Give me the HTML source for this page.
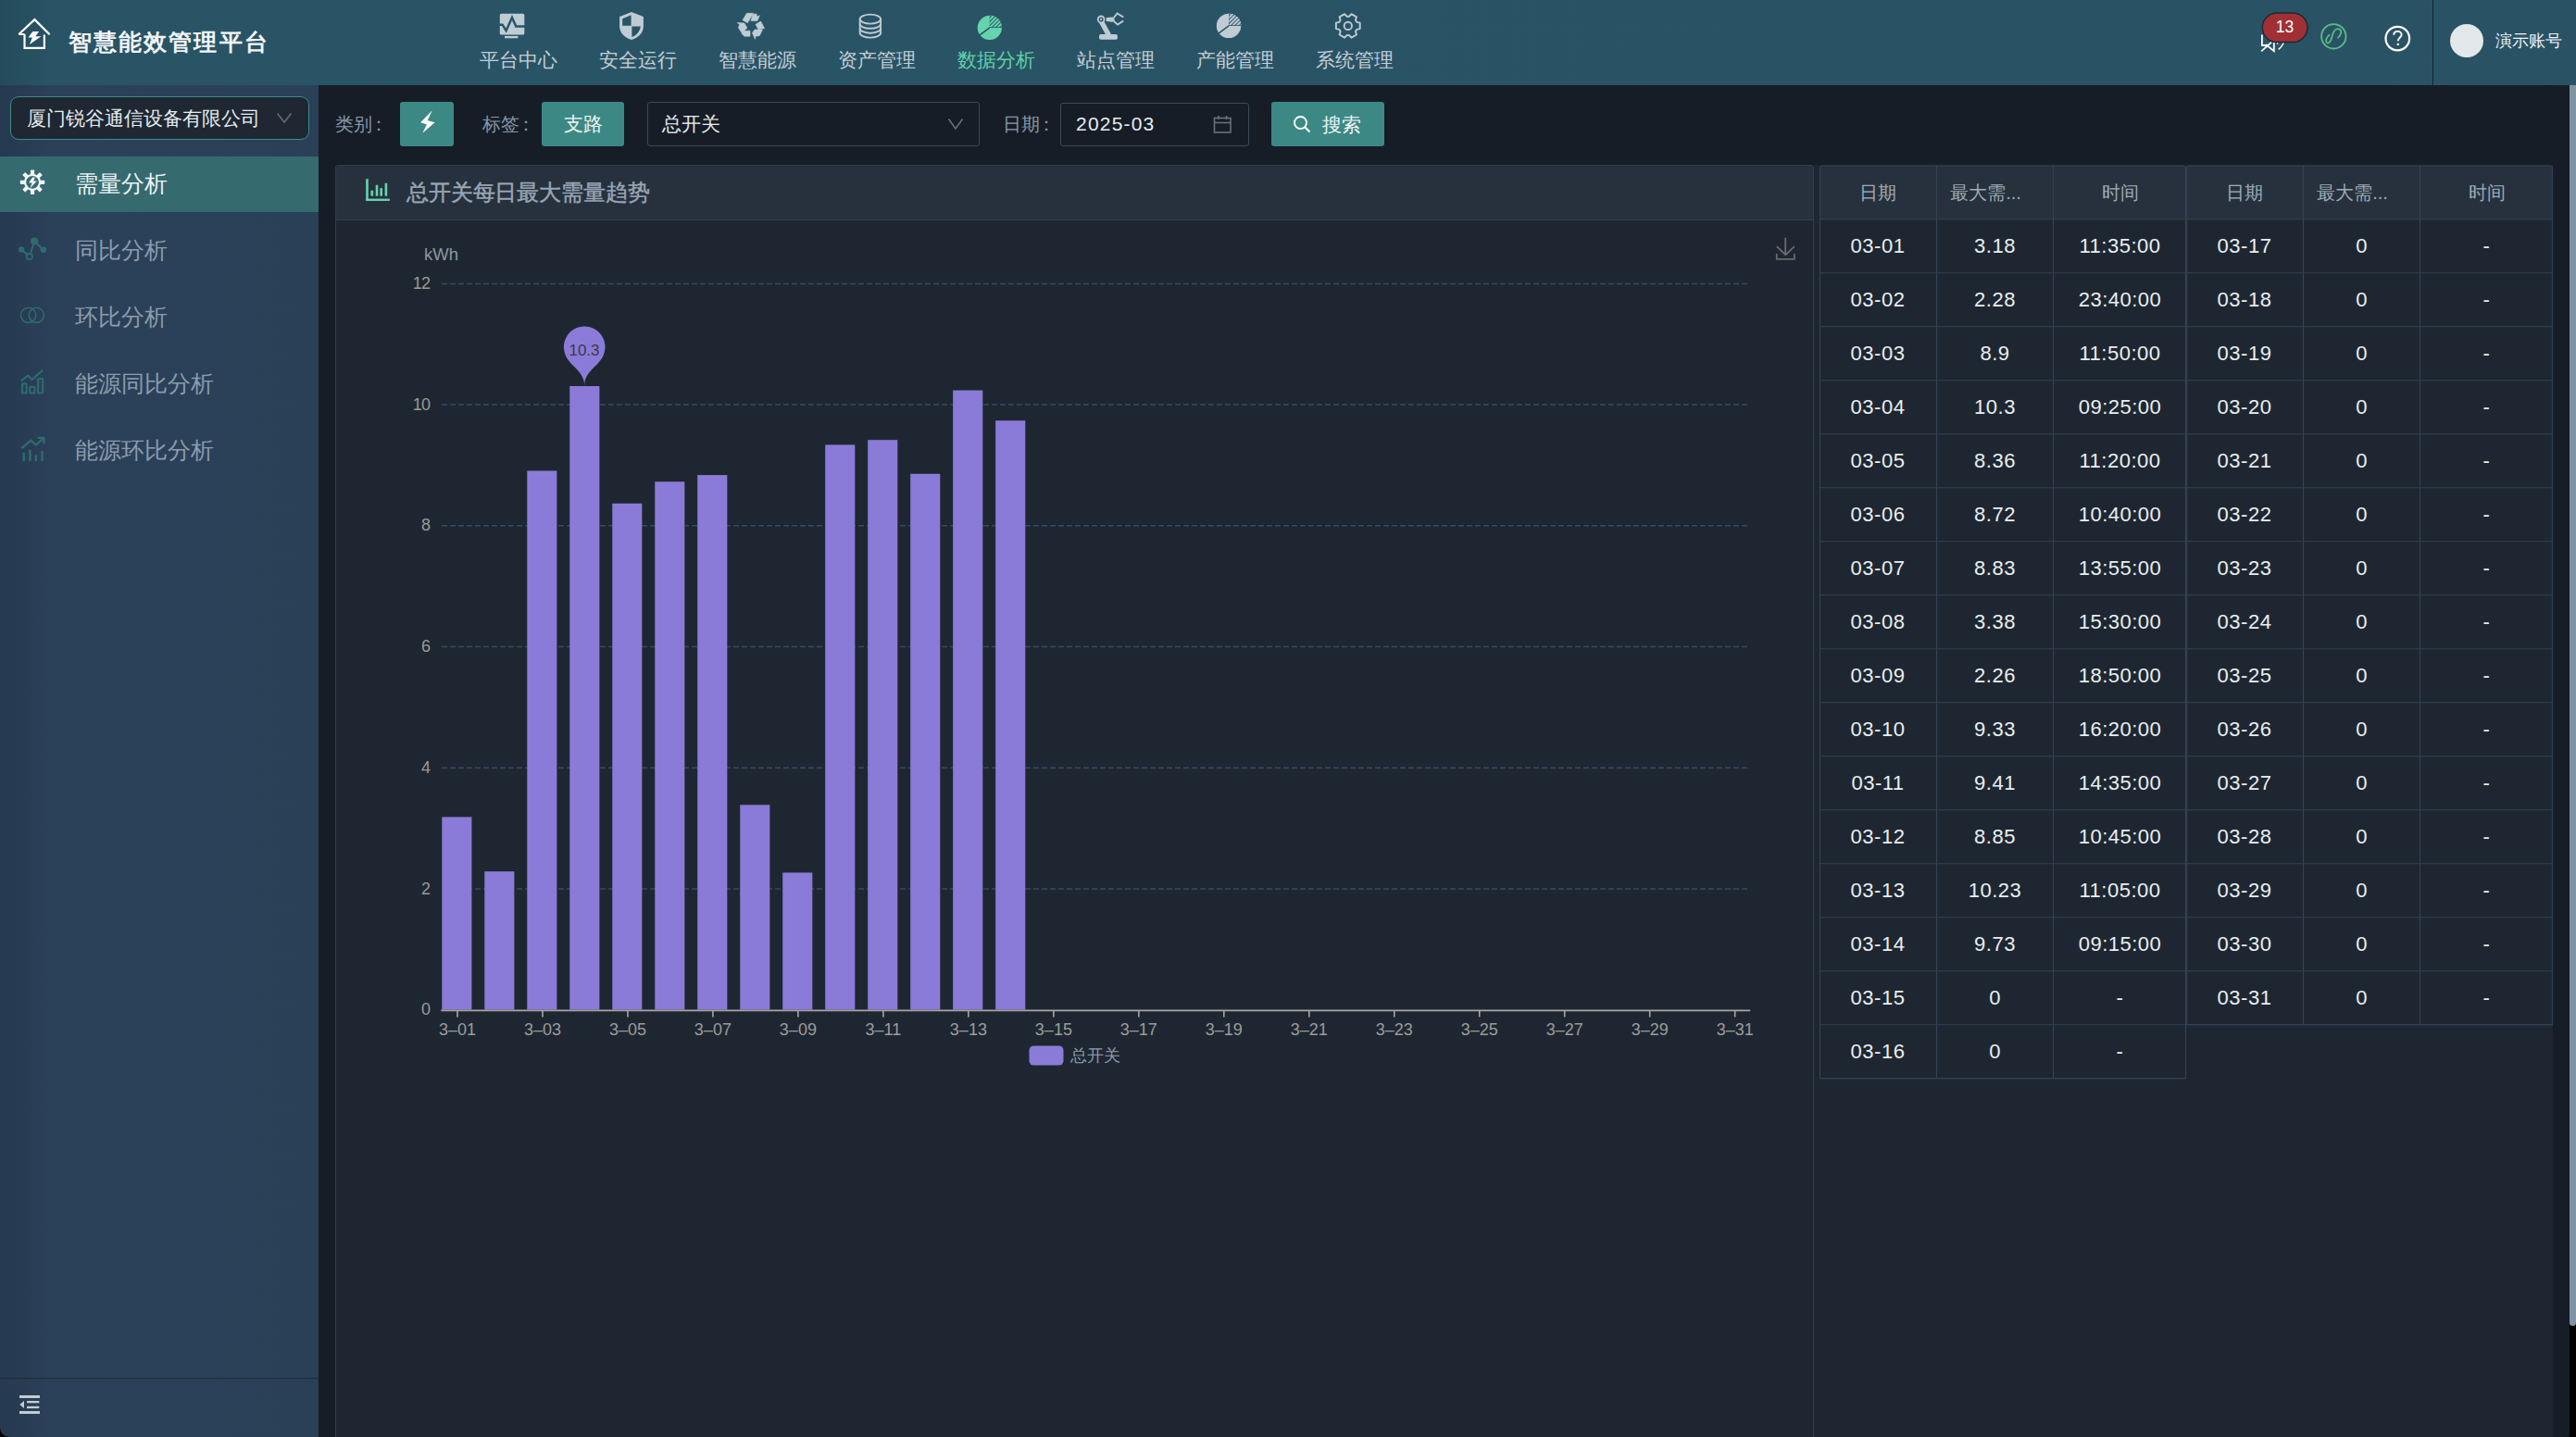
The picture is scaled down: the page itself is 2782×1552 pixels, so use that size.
<!DOCTYPE html><html><head><meta charset="utf-8"><style>
*{margin:0;padding:0;box-sizing:border-box}
html,body{width:2782px;height:1552px;overflow:hidden;background:#161d26;font-family:"Liberation Sans",sans-serif}
div,span,svg{position:absolute}
.t{white-space:nowrap}
.nav{top:53px;font-size:20.5px;color:#c3ced6;line-height:24px;width:120px;text-align:center}
.nav.on{color:#5fcfa8}
.mi{left:81px;font-size:24.5px;color:#8b9cad;line-height:28px;white-space:nowrap}
.lbl{top:122px;font-size:20px;color:#8796a6;line-height:24px;white-space:nowrap}
.cell{text-align:center;font-size:22px;color:#eaeef1;line-height:24px;letter-spacing:0.5px;white-space:nowrap}
.hcell{text-align:center;font-size:20px;color:#9eabb8;line-height:24px;white-space:nowrap}
.yl{width:60px;font-size:18px;color:#9a9a9a;line-height:20px;text-align:right;letter-spacing:-0.9px}
.xl{top:1102px;width:80px;font-size:18px;color:#9c9c9c;line-height:20px;text-align:center}
</style></head><body>
<div style="left:0;top:0;width:2782px;height:92px;background:linear-gradient(to right,#244b5c 0px,#295465 56px,#295364 2782px)"></div>
<svg style="left:0;top:0" width="80" height="80" viewBox="0 0 80 80">
<path d="M20.3 37 L37.4 21.1 L53.6 37.2 M26.5 37 V51.9 H47.9 V37.6 M20.3 37 H26.5" fill="none" stroke="#fff" stroke-width="2.2" stroke-linejoin="miter"/>
<path d="M42.1 34.1 H35.3 L30.5 40.6 H34.9 L32 47.9 L44.4 39.3 H38.3 Z" fill="#fff"/>
</svg>
<div class="t" style="left:74px;top:28.5px;font-size:25.3px;font-weight:bold;color:#f2f5f7;line-height:32px;letter-spacing:2.1px">智慧能效管理平台</div>
<div class="nav" style="left:500px">平台中心</div>
<div class="nav" style="left:629px">安全运行</div>
<div class="nav" style="left:758px">智慧能源</div>
<div class="nav" style="left:887px">资产管理</div>
<div class="nav on" style="left:1016px">数据分析</div>
<div class="nav" style="left:1145px">站点管理</div>
<div class="nav" style="left:1274px">产能管理</div>
<div class="nav" style="left:1403px">系统管理</div>
<svg style="left:0;top:0" width="1600" height="92" viewBox="0 0 1600 92"><rect x="539.8" y="14.8" width="26.5" height="22.7" rx="1.6" fill="#bfccd4"/><path d="M538 26.7 H542.6 L546.6 33.2 L553 19 L557.3 28.6 H568" fill="none" stroke="#295465" stroke-width="2.5" stroke-linejoin="miter"/><rect x="545" y="38.9" width="14.4" height="2.4" fill="#bfccd4"/><path d="M682 13 L694.9 17.9 V28.5 C694.9 35.5 689.5 40.5 682 43.1 C674.5 40.5 669.1 35.5 669.1 28.5 V17.9 Z" fill="#bfccd4"/><path d="M672.2 20.2 L681.6 16.3 V27.7 H672.2 Z M682.4 28.4 H691.8 C691.2 33.8 687.5 37.8 682.4 40.1 Z" fill="#295465"/><path d="M801.99 21.64 L806.48 14.31 L813.58 14.31 L807.43 24.72Z" fill="#bfccd4" stroke="#bfccd4" stroke-width="0.6" stroke-linejoin="round"/><path d="M810.98 22.59 L812.87 15.73 L816.42 14.78 L818.07 18.10 L820.44 16.68 L817.83 22.59Z" fill="#bfccd4" stroke="#bfccd4" stroke-width="0.6" stroke-linejoin="round"/><path d="M796.07 24.48 L803.88 24.95 L806.95 30.16 L801.04 35.60 L797.49 29.92 L798.68 26.37Z" fill="#bfccd4" stroke="#bfccd4" stroke-width="0.6" stroke-linejoin="round"/><path d="M802.93 33.23 L810.03 33.23 L810.03 39.15 L803.88 39.15 L800.81 36.07Z" fill="#bfccd4" stroke="#bfccd4" stroke-width="0.6" stroke-linejoin="round"/><path d="M812.39 35.60 L815.00 32.05 L823.51 32.05 L820.20 38.67 L816.18 38.91 L815.47 42.22Z" fill="#bfccd4" stroke="#bfccd4" stroke-width="0.6" stroke-linejoin="round"/><path d="M815.94 26.37 L821.62 23.06 L825.64 30.63 L819.02 31.81Z" fill="#bfccd4" stroke="#bfccd4" stroke-width="0.6" stroke-linejoin="round"/><g fill="none" stroke="#bfccd4" stroke-width="1.9"><ellipse cx="939.9" cy="20.6" rx="11.2" ry="5"/><path d="M928.6999999999999 20.6 V35.6 A11.2 5 0 0 0 951.1 35.6 V20.6"/><path d="M928.6999999999999 25.8 A11.2 5 0 0 0 951.1 25.8 M928.6999999999999 30.7 A11.2 5 0 0 0 951.1 30.7"/></g><path d="M1068.8 29.9 V16.799999999999997 A13.1 13.1 0 1 0 1081.8999999999999 29.9 Z" fill="#64d3ae"/><path d="M1068.8 29.9 L1057.54 38.39" stroke="#295465" stroke-width="1.5"/><clipPath id="pg"><path d="M1069.1 29.299999999999997 V16.499999999999996 A13.4 13.4 0 0 1 1082.1999999999998 29.299999999999997 Z"/></clipPath><g clip-path="url(#pg)"><path d="M1049.6 31.9 L1068.6999999999998 12.799999999999997 M1053.8999999999999 31.9 L1072.9999999999998 12.799999999999997 M1058.2 31.9 L1077.3 12.799999999999997 M1062.5 31.9 L1081.6 12.799999999999997 M1066.8 31.9 L1085.8999999999999 12.799999999999997 M1071.1 31.9 L1090.1999999999998 12.799999999999997 M1075.3999999999999 31.9 L1094.4999999999998 12.799999999999997 M1079.7 31.9 L1098.8 12.799999999999997 M1084.0 31.9 L1103.1 12.799999999999997 M1088.3 31.9 L1107.3999999999999 12.799999999999997 M1092.6 31.9 L1111.6999999999998 12.799999999999997 M1096.8999999999999 31.9 L1115.9999999999998 12.799999999999997 M1101.2 31.9 L1120.3 12.799999999999997" stroke="#64d3ae" stroke-width="2.1"/></g><path d="M1327.0 27.9 V14.7 A13.2 13.2 0 1 0 1340.2 27.9 Z" fill="#bfccd4"/><path d="M1327.0 27.9 L1315.66 36.45" stroke="#295465" stroke-width="1.5"/><clipPath id="pi"><path d="M1327.3 27.299999999999997 V14.399999999999999 A13.5 13.5 0 0 1 1340.5 27.299999999999997 Z"/></clipPath><g clip-path="url(#pi)"><path d="M1307.8 29.9 L1327.0 10.7 M1312.1 29.9 L1331.3 10.7 M1316.4 29.9 L1335.6000000000001 10.7 M1320.7 29.9 L1339.9 10.7 M1325.0 29.9 L1344.2 10.7 M1329.3 29.9 L1348.5 10.7 M1333.6 29.9 L1352.8 10.7 M1337.9 29.9 L1357.1000000000001 10.7 M1342.2 29.9 L1361.4 10.7 M1346.5 29.9 L1365.7 10.7 M1350.8 29.9 L1370.0 10.7 M1355.1 29.9 L1374.3 10.7 M1359.4 29.9 L1378.6000000000001 10.7" stroke="#bfccd4" stroke-width="2.1"/></g><rect x="1187" y="37.1" width="19.9" height="5.6" rx="1.8" fill="#bfccd4"/><path d="M1197.5 38 L1189.5 23.5" stroke="#bfccd4" stroke-width="5.4"/><circle cx="1189.1" cy="20.9" r="4.3" fill="#bfccd4"/><circle cx="1189.1" cy="20.9" r="2.5" fill="#295465"/><circle cx="1189.1" cy="20.9" r="1.1" fill="#bfccd4"/><path d="M1194.6 19.1 L1201.5 18.4 L1204 21 L1201.5 23.8 L1194.6 23.1 Z" fill="#bfccd4"/><path d="M1202.5 19.5 L1206.6 14.4 L1213.2 18.5 M1202.5 22.5 L1207 26.6 L1213.2 22.5" fill="none" stroke="#bfccd4" stroke-width="1.9"/><path d="M1465.19 23.91 L1468.70 24.68 L1468.70 31.12 L1465.19 31.89 A10.2 10.2 0 0 1 1463.95 34.04 L1465.04 37.47 L1459.47 40.68 L1457.04 38.02 A10.2 10.2 0 0 1 1454.56 38.02 L1452.13 40.68 L1446.56 37.47 L1447.65 34.04 A10.2 10.2 0 0 1 1446.41 31.89 L1442.90 31.12 L1442.90 24.68 L1446.41 23.91 A10.2 10.2 0 0 1 1447.65 21.76 L1446.56 18.33 L1452.13 15.12 L1454.56 17.78 A10.2 10.2 0 0 1 1457.04 17.78 L1459.47 15.12 L1465.04 18.33 L1463.95 21.76 A10.2 10.2 0 0 1 1465.19 23.91Z" fill="none" stroke="#bfccd4" stroke-width="1.9" stroke-linejoin="round"/><circle cx="1455.8" cy="27.9" r="4.2" fill="none" stroke="#bfccd4" stroke-width="1.9"/></svg>
<div style="left:2626.6px;top:0;width:1.4px;height:92px;background:#15212c"></div>
<svg style="left:2430px;top:0" width="200" height="92" viewBox="2430 0 200 92">
<g fill="none" stroke="#fff" stroke-width="1.8">
<path d="M2442.9 37.6 V49 H2449.1"/><path d="M2442.2 55.4 L2453.1 45.6"/><path d="M2447 48 L2455.8 55.2 V46"/>
<path d="M2460.7 53.4 C2463 51.5 2465 49 2466.3 46.5" stroke-width="1.5"/></g>
<circle cx="2459.6" cy="46.9" r="0.9" fill="#fff"/>
<rect x="2443.3" y="13.9" width="48.7" height="31.7" rx="15.85" fill="#a13034" stroke="#1c2a34" stroke-width="1.5"/>
<circle cx="2520.3" cy="39.3" r="13.2" fill="none" stroke="#5cbd87" stroke-width="1.8"/>
<path d="M2525.1 40.6 C2528.5 37.5 2529.5 33.5 2526.8 31.8 C2524.2 30.2 2520.8 32.2 2519.6 36 L2517.6 42.6 C2516.6 46 2513.8 47.6 2512.6 45.6 C2511.5 43.5 2513 40 2515.6 37.6" fill="none" stroke="#5cbd87" stroke-width="1.7" stroke-linecap="round"/>
<circle cx="2589.3" cy="41.6" r="12.8" fill="none" stroke="#fff" stroke-width="2.2"/>
<path d="M2585.2 37.8 C2585.2 35.4 2587 33.9 2589.4 33.9 C2591.8 33.9 2593.6 35.5 2593.6 37.6 C2593.6 40.3 2589.8 40.8 2589.8 44.3" fill="none" stroke="#fff" stroke-width="1.9"/>
<circle cx="2589.8" cy="47.9" r="1.2" fill="#fff"/>
</svg>
<div class="t" style="left:2443px;top:16px;width:49px;text-align:center;font-size:17.5px;color:#fff;line-height:26px">13</div>
<div style="left:2645.8px;top:25.7px;width:36.3px;height:36.3px;border-radius:50%;background:#e3e8ea"></div>
<div class="t" style="left:2694.5px;top:32px;font-size:18px;color:#eef2f4;line-height:24px">演示账号</div>
<div style="left:0;top:92px;width:344px;height:1460px;background:linear-gradient(to right,#25394f 0px,#2b4159 56px,#2a4057 344px)"></div>
<div style="left:11px;top:104px;width:323px;height:46.5px;border-radius:9px;border:1.5px solid #3c8c86;background:#1e2732"></div>
<div class="t" style="left:28.5px;top:115px;font-size:20.8px;color:#e6ebee;line-height:26px">厦门锐谷通信设备有限公司</div>
<svg style="left:296px;top:119px" width="22" height="18" viewBox="0 0 22 18"><path d="M3.5 3.5 L11 13 L18.5 3.5" fill="none" stroke="#646c76" stroke-width="1.6"/></svg>
<div style="left:0;top:169px;width:344px;height:60px;background:#356a6f"></div>
<svg style="left:0;top:0" width="344" height="1552" viewBox="0 0 344 1552"><circle cx="35.04" cy="196.8" r="8.0" fill="none" stroke="#f1f3f4" stroke-width="2.2"/><rect x="32.94" y="183.6" width="4.2" height="5.6" rx="0.6" fill="#f1f3f4" transform="rotate(0 35.04 196.8)"/><rect x="32.94" y="183.6" width="4.2" height="5.6" rx="0.6" fill="#f1f3f4" transform="rotate(45 35.04 196.8)"/><rect x="32.94" y="183.6" width="4.2" height="5.6" rx="0.6" fill="#f1f3f4" transform="rotate(90 35.04 196.8)"/><rect x="32.94" y="183.6" width="4.2" height="5.6" rx="0.6" fill="#f1f3f4" transform="rotate(135 35.04 196.8)"/><rect x="32.94" y="183.6" width="4.2" height="5.6" rx="0.6" fill="#f1f3f4" transform="rotate(180 35.04 196.8)"/><rect x="32.94" y="183.6" width="4.2" height="5.6" rx="0.6" fill="#f1f3f4" transform="rotate(225 35.04 196.8)"/><rect x="32.94" y="183.6" width="4.2" height="5.6" rx="0.6" fill="#f1f3f4" transform="rotate(270 35.04 196.8)"/><rect x="32.94" y="183.6" width="4.2" height="5.6" rx="0.6" fill="#f1f3f4" transform="rotate(315 35.04 196.8)"/><path d="M35.04 191.47 L37.93 191.47 L36.15 195.48 L39.94 195.48 L32.36 203.5 L34.59 197.48 L31.03 197.48 Z" fill="#f1f3f4"/><g stroke="#2e6c6d" stroke-width="2" fill="none"><path d="M23.2 269.4 L31.8 277 L37.2 260.6 L46.8 269.8"/></g><g fill="#2e6c6d"><circle cx="37.2" cy="260.6" r="4"/><circle cx="23.2" cy="269.4" r="3.2"/><circle cx="46.8" cy="269.8" r="3.2"/></g><circle cx="31.8" cy="277" r="3.2" fill="#2b4159" stroke="#2e6c6d" stroke-width="1.7"/><g fill="none" stroke="#2e6c6d" stroke-width="1.5"><circle cx="30.6" cy="340.4" r="8.1"/><circle cx="39.4" cy="340.4" r="8.1"/></g><g fill="none" stroke="#2e6c6d" stroke-width="2.1" stroke-linecap="round" stroke-linejoin="round"><path d="M23.4 410.9 L30.1 405.5 L34.6 410 L45.5 400.4"/><rect x="24" y="414.4" width="4.6" height="10.1" rx="0.8"/><rect x="32.3" y="417.7" width="5.1" height="6.8" rx="0.8"/><rect x="41.1" y="409" width="5.1" height="15.5" rx="0.8"/></g><g fill="none" stroke="#2e6c6d" stroke-width="2.3" stroke-linecap="round" stroke-linejoin="round"><path d="M23.8 483.6 L33.4 475.6 L38.8 480.6 L46.8 473.5"/><path d="M41.5 472.8 H47.4 V478.5"/><path d="M25.7 490 V497 M32.4 486.8 V497 M38.8 492.5 V497 M45.5 488 V497" stroke-width="2.5"/></g><rect x="0" y="1488" width="344" height="1.2" fill="#1d2d3c"/><g fill="#c4ccd4"><rect x="21" y="1507" width="22" height="3"/><rect x="21" y="1524" width="22" height="3"/><rect x="29" y="1513" width="13.3" height="2.3"/><rect x="29" y="1518.8" width="13.3" height="2.3"/><path d="M21.3 1517 L26 1513 V1521 Z"/></g><path d="M0 1542 A10 10 0 0 0 10 1552 H0 Z" fill="#000"/></svg>
<div class="mi" style="top:185px;color:#eef3f5">需量分析</div>
<div class="mi" style="top:257px">同比分析</div>
<div class="mi" style="top:329px">环比分析</div>
<div class="mi" style="top:401px">能源同比分析</div>
<div class="mi" style="top:473px">能源环比分析</div>
<div class="lbl" style="left:362px">类别<span style="position:relative;left:-3px">：</span></div>
<div style="left:432px;top:110px;width:58px;height:47.5px;background:#3c8884;border-radius:3px"></div>
<svg style="left:448px;top:115px" width="28" height="34" viewBox="0 0 28 34"><path d="M18.75 4.2 L6.2 17.35 L12.9 19.4 L8.3 28.8 L21.7 17.35 L13.7 15.05 Z" fill="#fff"/></svg>
<div class="lbl" style="left:521px">标签<span style="position:relative;left:-3px">：</span></div>
<div style="left:585px;top:110px;width:89px;height:47.5px;background:#3c8884;border-radius:3px"></div>
<div class="t" style="left:585px;top:121px;width:89px;text-align:center;font-size:21px;color:#f1f5f5;line-height:26px">支路</div>
<div style="left:698.5px;top:110px;width:359px;height:47.5px;border:1.3px solid #3b4857;border-radius:3px"></div>
<div class="t" style="left:715px;top:121px;font-size:20.5px;color:#e9edf0;line-height:26px">总开关</div>
<svg style="left:1021px;top:124px" width="22" height="20" viewBox="0 0 22 20"><path d="M3.5 4.5 L11 15 L18.5 4.5" fill="none" stroke="#6f767e" stroke-width="1.4"/></svg>
<div class="lbl" style="left:1083px">日期<span style="position:relative;left:-3px">：</span></div>
<div style="left:1145px;top:111px;width:203.5px;height:46.5px;border:1.3px solid #3b4857;border-radius:3px"></div>
<div class="t" style="left:1162px;top:121px;font-size:21px;color:#e9edf0;line-height:26px;letter-spacing:1.2px">2025-03</div>
<svg style="left:1308px;top:123px" width="26" height="24" viewBox="0 0 26 24">
<g fill="none" stroke="#6a717b" stroke-width="1.6"><rect x="3.5" y="4.5" width="17.5" height="15.5"/><path d="M3.5 9.5 H21 M8 2 V6 M16.5 2 V6"/></g></svg>
<div style="left:1373px;top:110px;width:122px;height:47.5px;background:#3c8884;border-radius:3px"></div>
<svg style="left:1393px;top:122px" width="26" height="24" viewBox="0 0 26 24">
<circle cx="11.5" cy="10.5" r="6.5" fill="none" stroke="#fff" stroke-width="1.9"/><path d="M16.2 15.2 L21.5 20.5" stroke="#fff" stroke-width="2"/></svg>
<div class="t" style="left:1428px;top:122px;font-size:21px;color:#f1f5f5;line-height:26px">搜索</div>
<div style="left:362px;top:178px;width:1597px;height:1380px;background:#1e2731;border:1.3px solid #2f3d4b;border-radius:3px"></div>
<div style="left:363px;top:179px;width:1595px;height:59.3px;background:#27313d;border-bottom:1.3px solid #2f3f4e;border-radius:3px 3px 0 0"></div>
<svg style="left:392px;top:191px" width="32" height="28" viewBox="0 0 32 28">
<g fill="#64d4ae"><rect x="3.2" y="2.2" width="2.6" height="23.8"/><rect x="3.2" y="23.6" width="25.7" height="2.4"/>
<rect x="8.5" y="14.7" width="2.6" height="6"/><rect x="13.7" y="8.8" width="2.6" height="11.9"/><rect x="18.4" y="12.1" width="2.6" height="8.6"/><rect x="23.6" y="6.8" width="2.6" height="13.9"/></g></svg>
<div class="t" style="left:439px;top:192.5px;font-size:23.6px;color:#97a5b4;line-height:30px;letter-spacing:-0.15px;-webkit-text-stroke:0.45px #97a5b4">总开关每日最大需量趋势</div>
<svg style="left:1912px;top:252px" width="32" height="34" viewBox="0 0 32 34">
<g fill="none" stroke="#686a6d" stroke-width="1.8"><path d="M16.2 4.8 V22.5 M6.8 14.2 L16.4 23.2 L25.9 14.2 M6.8 21.9 V27.8 H25.9 V21.9"/></g></svg>
<div class="t" style="left:458px;top:264px;font-size:18.5px;color:#8d97a1;line-height:22px">kWh</div>
<svg style="left:0;top:0" width="2782" height="1552" viewBox="0 0 2782 1552"><line x1="477" y1="959.98" x2="1890" y2="959.98" stroke="#34495f" stroke-width="1.5" stroke-dasharray="6 3"/><line x1="477" y1="829.26" x2="1890" y2="829.26" stroke="#34495f" stroke-width="1.5" stroke-dasharray="6 3"/><line x1="477" y1="698.54" x2="1890" y2="698.54" stroke="#34495f" stroke-width="1.5" stroke-dasharray="6 3"/><line x1="477" y1="567.82" x2="1890" y2="567.82" stroke="#34495f" stroke-width="1.5" stroke-dasharray="6 3"/><line x1="477" y1="437.10" x2="1890" y2="437.10" stroke="#34495f" stroke-width="1.5" stroke-dasharray="6 3"/><line x1="477" y1="306.38" x2="1890" y2="306.38" stroke="#34495f" stroke-width="1.5" stroke-dasharray="6 3"/><rect x="477.30" y="882.36" width="32.1" height="208.04" fill="#8b7bd8"/><rect x="523.29" y="941.18" width="32.1" height="149.22" fill="#8b7bd8"/><rect x="569.28" y="508.50" width="32.1" height="581.90" fill="#8b7bd8"/><rect x="615.27" y="416.99" width="32.1" height="673.41" fill="#8b7bd8"/><rect x="661.26" y="543.79" width="32.1" height="546.61" fill="#8b7bd8"/><rect x="707.25" y="520.26" width="32.1" height="570.14" fill="#8b7bd8"/><rect x="753.24" y="513.07" width="32.1" height="577.33" fill="#8b7bd8"/><rect x="799.23" y="869.28" width="32.1" height="221.12" fill="#8b7bd8"/><rect x="845.22" y="942.49" width="32.1" height="147.91" fill="#8b7bd8"/><rect x="891.21" y="480.39" width="32.1" height="610.01" fill="#8b7bd8"/><rect x="937.20" y="475.16" width="32.1" height="615.24" fill="#8b7bd8"/><rect x="983.19" y="511.76" width="32.1" height="578.64" fill="#8b7bd8"/><rect x="1029.18" y="421.57" width="32.1" height="668.83" fill="#8b7bd8"/><rect x="1075.17" y="454.25" width="32.1" height="636.15" fill="#8b7bd8"/><line x1="476.3" y1="1091.40" x2="1890.2" y2="1091.40" stroke="#a6a6a6" stroke-width="1.6"/><line x1="494.00" y1="1091.40" x2="494.00" y2="1098.40" stroke="#a6a6a6" stroke-width="1.6"/><line x1="585.98" y1="1091.40" x2="585.98" y2="1098.40" stroke="#a6a6a6" stroke-width="1.6"/><line x1="677.96" y1="1091.40" x2="677.96" y2="1098.40" stroke="#a6a6a6" stroke-width="1.6"/><line x1="769.94" y1="1091.40" x2="769.94" y2="1098.40" stroke="#a6a6a6" stroke-width="1.6"/><line x1="861.92" y1="1091.40" x2="861.92" y2="1098.40" stroke="#a6a6a6" stroke-width="1.6"/><line x1="953.90" y1="1091.40" x2="953.90" y2="1098.40" stroke="#a6a6a6" stroke-width="1.6"/><line x1="1045.88" y1="1091.40" x2="1045.88" y2="1098.40" stroke="#a6a6a6" stroke-width="1.6"/><line x1="1137.86" y1="1091.40" x2="1137.86" y2="1098.40" stroke="#a6a6a6" stroke-width="1.6"/><line x1="1229.84" y1="1091.40" x2="1229.84" y2="1098.40" stroke="#a6a6a6" stroke-width="1.6"/><line x1="1321.82" y1="1091.40" x2="1321.82" y2="1098.40" stroke="#a6a6a6" stroke-width="1.6"/><line x1="1413.80" y1="1091.40" x2="1413.80" y2="1098.40" stroke="#a6a6a6" stroke-width="1.6"/><line x1="1505.78" y1="1091.40" x2="1505.78" y2="1098.40" stroke="#a6a6a6" stroke-width="1.6"/><line x1="1597.76" y1="1091.40" x2="1597.76" y2="1098.40" stroke="#a6a6a6" stroke-width="1.6"/><line x1="1689.74" y1="1091.40" x2="1689.74" y2="1098.40" stroke="#a6a6a6" stroke-width="1.6"/><line x1="1781.72" y1="1091.40" x2="1781.72" y2="1098.40" stroke="#a6a6a6" stroke-width="1.6"/><line x1="1873.70" y1="1091.40" x2="1873.70" y2="1098.40" stroke="#a6a6a6" stroke-width="1.6"/><rect x="1111.5" y="1129.4" width="37" height="21.2" rx="5" fill="#8b7bd8"/><path d="M611.10 384.41 A22.3 22.3 0 1 1 651.30 384.41 C645.51 396.47 631.20 400.99 631.20 416.60 C631.20 400.99 616.89 396.47 611.10 384.41Z" fill="#8b7bd8"/></svg>
<div class="t" style="left:591px;top:368px;width:80px;text-align:center;font-size:17px;color:#3b3946;line-height:22px">10.3</div>
<div class="yl" style="left:404.1px;top:1080.2px">0</div>
<div class="yl" style="left:404.1px;top:949.5px">2</div>
<div class="yl" style="left:404.1px;top:818.8px">4</div>
<div class="yl" style="left:404.1px;top:688.0px">6</div>
<div class="yl" style="left:404.1px;top:557.3px">8</div>
<div class="yl" style="left:404.1px;top:426.6px">10</div>
<div class="yl" style="left:404.1px;top:295.9px">12</div>
<div class="xl" style="left:454.0px">3–01</div>
<div class="xl" style="left:546.0px">3–03</div>
<div class="xl" style="left:638.0px">3–05</div>
<div class="xl" style="left:729.9px">3–07</div>
<div class="xl" style="left:821.9px">3–09</div>
<div class="xl" style="left:913.9px">3–11</div>
<div class="xl" style="left:1005.9px">3–13</div>
<div class="xl" style="left:1097.9px">3–15</div>
<div class="xl" style="left:1189.8px">3–17</div>
<div class="xl" style="left:1281.8px">3–19</div>
<div class="xl" style="left:1373.8px">3–21</div>
<div class="xl" style="left:1465.8px">3–23</div>
<div class="xl" style="left:1557.8px">3–25</div>
<div class="xl" style="left:1649.7px">3–27</div>
<div class="xl" style="left:1741.7px">3–29</div>
<div class="xl" style="left:1833.7px">3–31</div>
<div class="t" style="left:1156px;top:1128px;font-size:18px;color:#8e9ca8;line-height:24px">总开关</div>
<div style="left:1959px;top:178px;width:798px;height:1380px;background:#1e2731"></div>
<div style="left:1965px;top:178.5px;width:396px;height:58.2px;background:#27313d;border-radius:4px 4px 0 0"></div>
<svg style="left:0;top:0" width="2782" height="1552" viewBox="0 0 2782 1552"><g stroke="#334252" stroke-width="1.15" fill="none"><path d="M1965.5 1164.7 V182.5 Q1965.5 179.0 1969 179.0 H2357 Q2360.5 179.0 2360.5 182.5 V1164.7 H1965.5"/><line x1="2091.5" y1="178.5" x2="2091.5" y2="1164.7"/><line x1="2217.5" y1="178.5" x2="2217.5" y2="1164.7"/><line x1="1965" y1="236.7" x2="2361" y2="236.7"/><line x1="1965" y1="294.7" x2="2361" y2="294.7"/><line x1="1965" y1="352.7" x2="2361" y2="352.7"/><line x1="1965" y1="410.7" x2="2361" y2="410.7"/><line x1="1965" y1="468.7" x2="2361" y2="468.7"/><line x1="1965" y1="526.7" x2="2361" y2="526.7"/><line x1="1965" y1="584.7" x2="2361" y2="584.7"/><line x1="1965" y1="642.7" x2="2361" y2="642.7"/><line x1="1965" y1="700.7" x2="2361" y2="700.7"/><line x1="1965" y1="758.7" x2="2361" y2="758.7"/><line x1="1965" y1="816.7" x2="2361" y2="816.7"/><line x1="1965" y1="874.7" x2="2361" y2="874.7"/><line x1="1965" y1="932.7" x2="2361" y2="932.7"/><line x1="1965" y1="990.7" x2="2361" y2="990.7"/><line x1="1965" y1="1048.7" x2="2361" y2="1048.7"/><line x1="1965" y1="1106.7" x2="2361" y2="1106.7"/><line x1="1965" y1="1164.7" x2="2361" y2="1164.7"/></g></svg>
<div class="hcell" style="left:1965px;top:195.5px;width:126px">日期</div>
<div class="hcell" style="left:2081.5px;top:195.5px;width:126px">最大需...</div>
<div class="hcell" style="left:2217.5px;top:195.5px;width:144px">时间</div>
<div class="cell" style="left:1965px;top:253.7px;width:126px">03-01</div>
<div class="cell" style="left:2091.5px;top:253.7px;width:126px">3.18</div>
<div class="cell" style="left:2217.5px;top:253.7px;width:144px">11:35:00</div>
<div class="cell" style="left:1965px;top:311.7px;width:126px">03-02</div>
<div class="cell" style="left:2091.5px;top:311.7px;width:126px">2.28</div>
<div class="cell" style="left:2217.5px;top:311.7px;width:144px">23:40:00</div>
<div class="cell" style="left:1965px;top:369.7px;width:126px">03-03</div>
<div class="cell" style="left:2091.5px;top:369.7px;width:126px">8.9</div>
<div class="cell" style="left:2217.5px;top:369.7px;width:144px">11:50:00</div>
<div class="cell" style="left:1965px;top:427.7px;width:126px">03-04</div>
<div class="cell" style="left:2091.5px;top:427.7px;width:126px">10.3</div>
<div class="cell" style="left:2217.5px;top:427.7px;width:144px">09:25:00</div>
<div class="cell" style="left:1965px;top:485.7px;width:126px">03-05</div>
<div class="cell" style="left:2091.5px;top:485.7px;width:126px">8.36</div>
<div class="cell" style="left:2217.5px;top:485.7px;width:144px">11:20:00</div>
<div class="cell" style="left:1965px;top:543.7px;width:126px">03-06</div>
<div class="cell" style="left:2091.5px;top:543.7px;width:126px">8.72</div>
<div class="cell" style="left:2217.5px;top:543.7px;width:144px">10:40:00</div>
<div class="cell" style="left:1965px;top:601.7px;width:126px">03-07</div>
<div class="cell" style="left:2091.5px;top:601.7px;width:126px">8.83</div>
<div class="cell" style="left:2217.5px;top:601.7px;width:144px">13:55:00</div>
<div class="cell" style="left:1965px;top:659.7px;width:126px">03-08</div>
<div class="cell" style="left:2091.5px;top:659.7px;width:126px">3.38</div>
<div class="cell" style="left:2217.5px;top:659.7px;width:144px">15:30:00</div>
<div class="cell" style="left:1965px;top:717.7px;width:126px">03-09</div>
<div class="cell" style="left:2091.5px;top:717.7px;width:126px">2.26</div>
<div class="cell" style="left:2217.5px;top:717.7px;width:144px">18:50:00</div>
<div class="cell" style="left:1965px;top:775.7px;width:126px">03-10</div>
<div class="cell" style="left:2091.5px;top:775.7px;width:126px">9.33</div>
<div class="cell" style="left:2217.5px;top:775.7px;width:144px">16:20:00</div>
<div class="cell" style="left:1965px;top:833.7px;width:126px">03-11</div>
<div class="cell" style="left:2091.5px;top:833.7px;width:126px">9.41</div>
<div class="cell" style="left:2217.5px;top:833.7px;width:144px">14:35:00</div>
<div class="cell" style="left:1965px;top:891.7px;width:126px">03-12</div>
<div class="cell" style="left:2091.5px;top:891.7px;width:126px">8.85</div>
<div class="cell" style="left:2217.5px;top:891.7px;width:144px">10:45:00</div>
<div class="cell" style="left:1965px;top:949.7px;width:126px">03-13</div>
<div class="cell" style="left:2091.5px;top:949.7px;width:126px">10.23</div>
<div class="cell" style="left:2217.5px;top:949.7px;width:144px">11:05:00</div>
<div class="cell" style="left:1965px;top:1007.7px;width:126px">03-14</div>
<div class="cell" style="left:2091.5px;top:1007.7px;width:126px">9.73</div>
<div class="cell" style="left:2217.5px;top:1007.7px;width:144px">09:15:00</div>
<div class="cell" style="left:1965px;top:1065.7px;width:126px">03-15</div>
<div class="cell" style="left:2091.5px;top:1065.7px;width:126px">0</div>
<div class="cell" style="left:2217.5px;top:1065.7px;width:144px">-</div>
<div class="cell" style="left:1965px;top:1123.7px;width:126px">03-16</div>
<div class="cell" style="left:2091.5px;top:1123.7px;width:126px">0</div>
<div class="cell" style="left:2217.5px;top:1123.7px;width:144px">-</div>
<div style="left:2361px;top:178.5px;width:396px;height:58.2px;background:#27313d;border-radius:4px 4px 0 0"></div>
<svg style="left:0;top:0" width="2782" height="1552" viewBox="0 0 2782 1552"><g stroke="#334252" stroke-width="1.15" fill="none"><path d="M2361.5 1106.7 V182.5 Q2361.5 179.0 2365 179.0 H2753 Q2756.5 179.0 2756.5 182.5 V1106.7 H2361.5"/><line x1="2487.5" y1="178.5" x2="2487.5" y2="1106.7"/><line x1="2613.5" y1="178.5" x2="2613.5" y2="1106.7"/><line x1="2361" y1="236.7" x2="2757" y2="236.7"/><line x1="2361" y1="294.7" x2="2757" y2="294.7"/><line x1="2361" y1="352.7" x2="2757" y2="352.7"/><line x1="2361" y1="410.7" x2="2757" y2="410.7"/><line x1="2361" y1="468.7" x2="2757" y2="468.7"/><line x1="2361" y1="526.7" x2="2757" y2="526.7"/><line x1="2361" y1="584.7" x2="2757" y2="584.7"/><line x1="2361" y1="642.7" x2="2757" y2="642.7"/><line x1="2361" y1="700.7" x2="2757" y2="700.7"/><line x1="2361" y1="758.7" x2="2757" y2="758.7"/><line x1="2361" y1="816.7" x2="2757" y2="816.7"/><line x1="2361" y1="874.7" x2="2757" y2="874.7"/><line x1="2361" y1="932.7" x2="2757" y2="932.7"/><line x1="2361" y1="990.7" x2="2757" y2="990.7"/><line x1="2361" y1="1048.7" x2="2757" y2="1048.7"/><line x1="2361" y1="1106.7" x2="2757" y2="1106.7"/></g></svg>
<div class="hcell" style="left:2361px;top:195.5px;width:126px">日期</div>
<div class="hcell" style="left:2477.5px;top:195.5px;width:126px">最大需...</div>
<div class="hcell" style="left:2613.5px;top:195.5px;width:144px">时间</div>
<div class="cell" style="left:2361px;top:253.7px;width:126px">03-17</div>
<div class="cell" style="left:2487.5px;top:253.7px;width:126px">0</div>
<div class="cell" style="left:2613.5px;top:253.7px;width:144px">-</div>
<div class="cell" style="left:2361px;top:311.7px;width:126px">03-18</div>
<div class="cell" style="left:2487.5px;top:311.7px;width:126px">0</div>
<div class="cell" style="left:2613.5px;top:311.7px;width:144px">-</div>
<div class="cell" style="left:2361px;top:369.7px;width:126px">03-19</div>
<div class="cell" style="left:2487.5px;top:369.7px;width:126px">0</div>
<div class="cell" style="left:2613.5px;top:369.7px;width:144px">-</div>
<div class="cell" style="left:2361px;top:427.7px;width:126px">03-20</div>
<div class="cell" style="left:2487.5px;top:427.7px;width:126px">0</div>
<div class="cell" style="left:2613.5px;top:427.7px;width:144px">-</div>
<div class="cell" style="left:2361px;top:485.7px;width:126px">03-21</div>
<div class="cell" style="left:2487.5px;top:485.7px;width:126px">0</div>
<div class="cell" style="left:2613.5px;top:485.7px;width:144px">-</div>
<div class="cell" style="left:2361px;top:543.7px;width:126px">03-22</div>
<div class="cell" style="left:2487.5px;top:543.7px;width:126px">0</div>
<div class="cell" style="left:2613.5px;top:543.7px;width:144px">-</div>
<div class="cell" style="left:2361px;top:601.7px;width:126px">03-23</div>
<div class="cell" style="left:2487.5px;top:601.7px;width:126px">0</div>
<div class="cell" style="left:2613.5px;top:601.7px;width:144px">-</div>
<div class="cell" style="left:2361px;top:659.7px;width:126px">03-24</div>
<div class="cell" style="left:2487.5px;top:659.7px;width:126px">0</div>
<div class="cell" style="left:2613.5px;top:659.7px;width:144px">-</div>
<div class="cell" style="left:2361px;top:717.7px;width:126px">03-25</div>
<div class="cell" style="left:2487.5px;top:717.7px;width:126px">0</div>
<div class="cell" style="left:2613.5px;top:717.7px;width:144px">-</div>
<div class="cell" style="left:2361px;top:775.7px;width:126px">03-26</div>
<div class="cell" style="left:2487.5px;top:775.7px;width:126px">0</div>
<div class="cell" style="left:2613.5px;top:775.7px;width:144px">-</div>
<div class="cell" style="left:2361px;top:833.7px;width:126px">03-27</div>
<div class="cell" style="left:2487.5px;top:833.7px;width:126px">0</div>
<div class="cell" style="left:2613.5px;top:833.7px;width:144px">-</div>
<div class="cell" style="left:2361px;top:891.7px;width:126px">03-28</div>
<div class="cell" style="left:2487.5px;top:891.7px;width:126px">0</div>
<div class="cell" style="left:2613.5px;top:891.7px;width:144px">-</div>
<div class="cell" style="left:2361px;top:949.7px;width:126px">03-29</div>
<div class="cell" style="left:2487.5px;top:949.7px;width:126px">0</div>
<div class="cell" style="left:2613.5px;top:949.7px;width:144px">-</div>
<div class="cell" style="left:2361px;top:1007.7px;width:126px">03-30</div>
<div class="cell" style="left:2487.5px;top:1007.7px;width:126px">0</div>
<div class="cell" style="left:2613.5px;top:1007.7px;width:144px">-</div>
<div class="cell" style="left:2361px;top:1065.7px;width:126px">03-31</div>
<div class="cell" style="left:2487.5px;top:1065.7px;width:126px">0</div>
<div class="cell" style="left:2613.5px;top:1065.7px;width:144px">-</div>
<div style="left:2774.5px;top:92px;width:7.5px;height:1460px;background:#000"></div>
<div style="left:2774.8px;top:92px;width:7.2px;height:1340px;background:#8093a4;border-radius:0 0 3.6px 3.6px"></div>
<svg style="left:2762px;top:1542px" width="20" height="10" viewBox="2762 1542 20 10"><path d="M2782 1542 A10 10 0 0 1 2772 1552 H2782 Z" fill="#000"/></svg>
</body></html>
